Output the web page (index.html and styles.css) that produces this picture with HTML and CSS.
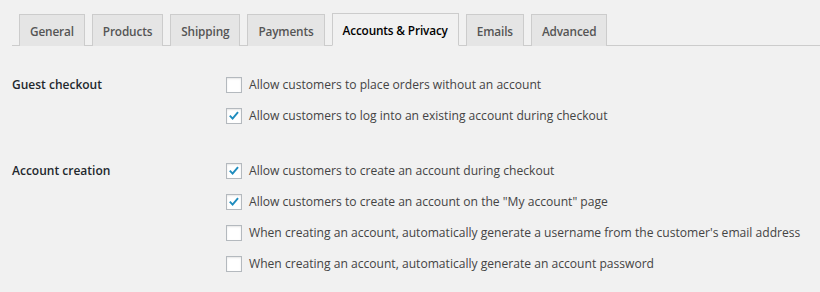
FILE: index.html
```
<!DOCTYPE html>
<html lang="en">
<head>
<meta charset="utf-8">
<title>Accounts &amp; Privacy</title>
<link rel="stylesheet" href="styles.css">
</head>
<body>
<nav class="tabs">
  <a class="tab">General</a>
  <a class="tab">Products</a>
  <a class="tab">Shipping</a>
  <a class="tab">Payments</a>
  <a class="tab active">Accounts &amp; Privacy</a>
  <a class="tab">Emails</a>
  <a class="tab">Advanced</a>
</nav>
<div class="form">
  <section class="row first">
    <div class="heading">Guest checkout</div>
    <div class="options">
      <label class="opt"><span class="box"></span>Allow customers to place orders without an account</label>
      <label class="opt"><span class="box checked"><svg viewBox="0 0 16 16"><path d="M3.2 7.6 L6.4 11 L12.6 3.6" /></svg></span>Allow customers to log into an existing account during checkout</label>
    </div>
  </section>
  <section class="row">
    <div class="heading">Account creation</div>
    <div class="options">
      <label class="opt"><span class="box checked"><svg viewBox="0 0 16 16"><path d="M3.2 7.6 L6.4 11 L12.6 3.6" /></svg></span>Allow customers to create an account during checkout</label>
      <label class="opt"><span class="box checked"><svg viewBox="0 0 16 16"><path d="M3.2 7.6 L6.4 11 L12.6 3.6" /></svg></span>Allow customers to create an account on the "My account" page</label>
      <label class="opt"><span class="box"></span>When creating an account, automatically generate a username from the customer's email address</label>
      <label class="opt"><span class="box"></span>When creating an account, automatically generate an account password</label>
    </div>
  </section>
</div>
</body>
</html>
```
FILE: styles.css
```
html, body {
  margin: 0;
  padding: 0;
  background: #f1f1f1;
}
body {
  font-family: "Open Sans", "Noto Sans", sans-serif;
  color: #444;
  width: 820px;
  height: 292px;
  overflow: hidden;
}
.tabs {
  display: flex;
  align-items: flex-end;
  margin: 13px 0 0 12px;
  border-bottom: 1px solid #ccc;
  height: 32px;
}
.tab {
  box-sizing: border-box;
  height: 32px;
  margin-left: 7px;
  margin-bottom: -1px;
  padding: 0 10px;
  display: flex;
  align-items: center;
  font-size: 11.8px;
  letter-spacing: -0.15px;
  font-weight: 600;
  color: #555;
  background: #e5e5e5;
  border: 1px solid #ccc;
  border-bottom: none;
  white-space: nowrap;
}
.tab.active {
  background: #f1f1f1;
  color: #000;
  height: 33px;
  border-bottom: 1px solid #f1f1f1;
}
.form {
  padding-left: 12px;
}
.row {
  display: grid;
  grid-template-columns: 214px 1fr;
  margin-top: 24px;
}
.row.first {
  margin-top: 23px;
}
.heading {
  font-size: 12px;
  font-weight: 600;
  color: #23282d;
  line-height: 31px;
}
.options {
  display: flex;
  flex-direction: column;
}
.opt {
  height: 31px;
  display: flex;
  align-items: center;
  font-size: 12.1px;
  white-space: nowrap;
}
.box {
  box-sizing: border-box;
  width: 16px;
  height: 16px;
  margin-right: 7px;
  border: 1px solid #b4b9be;
  background: #fff;
  box-shadow: inset 0 1px 2px rgba(0,0,0,0.1);
  flex: none;
  display: flex;
}
.box svg {
  width: 14px;
  height: 14px;
}
.box path {
  fill: none;
  stroke: #1e8cbe;
  stroke-width: 2.2;
}
```
